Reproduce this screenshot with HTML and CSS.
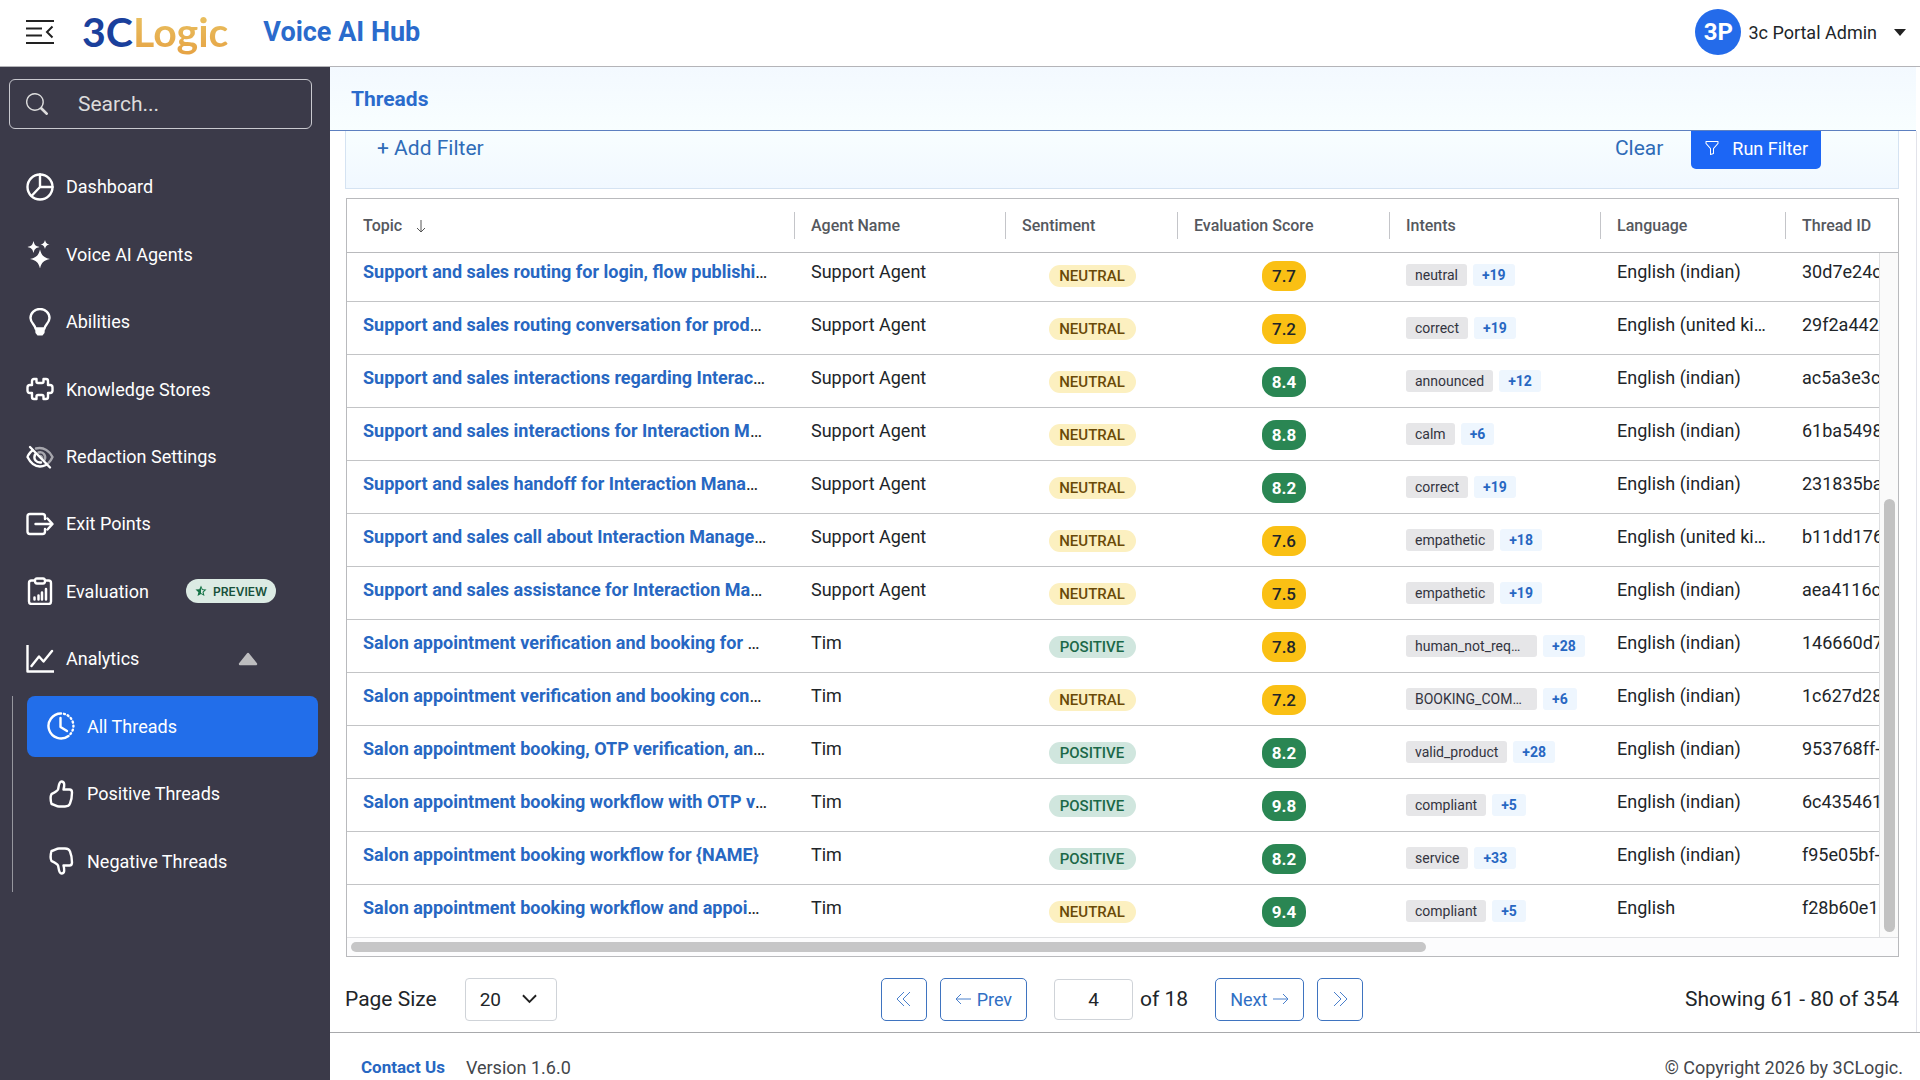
FILE: index.html
```html
<!DOCTYPE html>
<html lang="en">
<head>
  <meta charset="UTF-8">
  <title>Voice AI Hub - Threads</title>
  <link rel="stylesheet" href="styles.css">
</head>
<body>

<header class="topbar">
  <button class="menu-toggle" aria-label="Toggle menu">
    <svg width="28" height="24" viewBox="0 0 28 24" fill="none" stroke="#222" stroke-width="2"><path d="M0 1h28M0 8.500h16M0 15.500h16M0 23h28M26.500 6.500l-5.500 5.500 5.500 5.500"/></svg>
  </button>
  <a href="#" class="logo"><span class="logo-3c">3C</span><span class="logo-logic">Logic</span></a>
  <h1>Voice AI Hub</h1>
  <button class="user">
    <span class="avatar">3P</span>
    <span>3c Portal Admin</span>
    <svg class="caret" width="12" height="7" viewBox="0 0 12 7" fill="#222"><path d="M0 0h12L6 7z"/></svg>
  </button>
</header>

<div class="layout">

<aside class="sidebar">
  <label class="search">
    <svg width="22" height="22" viewBox="0 0 16 16" fill="#ddd"><path d="M11.742 10.344a6.500 6.500 0 1 0-1.397 1.398l3.948 3.965a1 1 0 0 0 1.415-1.414zM12 6.500a5.500 5.500 0 1 1-11 0 5.500 5.500 0 0 1 11 0"/></svg>
    <input type="text" placeholder="Search..." aria-label="Search">
  </label>

  <nav class="menu">
    <a href="#">
      <svg viewBox="0 0 28 28"><circle cx="14" cy="14" r="12.500"/><path d="M14 1.500V14h12.500M14 14l-8.500 9"/></svg>
      Dashboard
    </a>
    <a href="#">
      <svg viewBox="0 0 28 28" class="solid"><path d="M14 9.500c1.500 6 3.500 8 10 9.500-6.500 1.500-8.500 3.500-10 9.500-1.500-6-3.500-8-10-9.500 6.500-1.500 8.500-3.500 10-9.500zM7.500 1c1 4 2 5 6 6-4 1-5 2-6 6-1-4-2-5-6-6 4-1 5-2 6-6zM19 0c.8 3 1.500 3.700 4.500 4.500-3 .8-3.700 1.500-4.500 4.500-.8-3-1.500-3.700-4.500-4.500 3-.8 3.700-1.500 4.500-4.500z"/></svg>
      Voice AI Agents
    </a>
    <a href="#">
      <svg viewBox="0 0 28 28"><path d="M9.500 20.500c0-3-5-5.500-5-10.500a9.500 9 0 0 1 19 0c0 5-5 7.500-5 10.500z"/><path class="solid" d="M9 20h10l-.5 5-2 2.500h-5l-2-2.500z"/></svg>
      Abilities
    </a>
    <a href="#">
      <svg viewBox="0 0 28 28"><path d="M8 4h2.500v2.500q0 1.500 1.500 1.500h4q1.500 0 1.500-1.500V4H20q2 0 2 2v4h2q2.500 0 2.500 2.500v3q0 2.500-2.500 2.500h-2v4q0 2-2 2h-2.500v-2.500q0-1.500-1.500-1.500h-4q-1.500 0-1.500 1.500V24H8q-2 0-2-2v-4H4q-2.500 0-2.500-2.500v-3Q1.500 10 4 10h2V6q0-2 2-2z"/></svg>
      Knowledge Stores
    </a>
    <a href="#">
      <svg viewBox="0 0 28 28"><g><path d="M6.500 7.500C4 9 1.500 13 1.500 14c2 4 6.500 9.500 12.500 9.500 2 0 4-.6 6-1.500"/><path d="M9 11.500c-2 5 1.500 8.500 6 8"/></g><g opacity=".55"><path d="M10 5.500c8-2 14 3 16.500 8.500-1 2.500-2.500 4.500-4.500 6.500"/><path d="M12.500 9.500c5-1.500 8 3.500 6 7.500M13.500 13a2 2 0 0 1 2.500 2.500"/></g><path d="M4 4l20 20.500"/></svg>
      Redaction Settings
    </a>
    <a href="#">
      <svg viewBox="0 0 28 28"><path d="M19 9V6.500q0-2.500-2.500-2.500H4Q1.500 4 1.500 6.500v15Q1.500 24 4 24h12.500q2.500 0 2.500-2.500V19M9.500 14H26M21.500 8.500l5 5.500-5 5.500"/></svg>
      Exit Points
    </a>
    <a href="#">
      <svg viewBox="0 0 28 28"><path d="M9 3.500H5.500q-2.500 0-2.500 2.500v18.500Q3 27 5.500 27h17q2.500 0 2.500-2.500V6q0-2.500-2.500-2.500H19M11 1.500h6q2 0 2 2.500t-2 2.500h-6Q9 6.500 9 4t2-2.500z"/><path stroke-width="2.500" d="M8.500 22.500v-2M12.500 22.500v-4M16 22.500v-7M20 22.500V12"/></svg>
      Evaluation
      <span class="preview"><svg width="12" height="12" viewBox="0 0 24 24"><path d="M12 1l3.300 7.300 7.700.8-5.800 5.200L19 22l-7-4-7 4 1.800-7.700L1 9.100l7.700-.8zm0 4.500v10.700l3.900 2.300-1-4.700 3.500-3.200-4.500-.5z" fill="#157347" fill-rule="evenodd" stroke="none"/></svg>PREVIEW</span>
    </a>
    <a href="#">
      <svg viewBox="0 0 28 28"><path d="M1.500 0v26.500H28M5.500 21l7.500-9.500 4.500 5L26 6"/></svg>
      Analytics
      <svg class="up" viewBox="0 0 20 14"><path d="M10 2l8 10H2z"/></svg>
    </a>
    <div class="submenu">
      <a href="#" class="active">
        <svg viewBox="0 0 28 28"><path d="M14 1.500a12.500 12.500 0 1 0 7.500 22.500"/><path stroke-dasharray="1 3" d="M17 1.800A12.500 12.500 0 0 1 23 22.500"/><path d="M13.500 6v9l6.500 4"/></svg>
        All Threads
      </a>
      <a href="#">
        <svg viewBox="0 0 28 28"><path d="M4.500 14c2-1 5.500-2.500 6.500-4.500.8-2 .6-8 3.500-8 3.500 0 3 4.500 2 8h6q2.500 0 2.500 3c0 4-.5 7.500-2 11-.8 2.500-2.500 3-5 3h-6c-2.500 0-4.500-2-7.500-2.500-1-3.500-1.500-7 0-10z"/></svg>
        Positive Threads
      </a>
      <a href="#">
        <svg viewBox="0 0 28 28"><path d="M4.500 14c2 1 5.500 2.500 6.500 4.500.8 2 .6 8 3.500 8 3.500 0 3-4.500 2-8h6q2.500 0 2.500-3c0-4-.5-7.500-2-11-.8-2.500-2.500-3-5-3h-6C9.500 1.500 7.500 3.500 4.500 4c-1 3.500-1.500 7 0 10z"/></svg>
        Negative Threads
      </a>
    </div>
  </nav>
</aside>

<main class="main">
  <div class="page-title"><h2>Threads</h2></div>

  <section class="content">
    <div class="filter">
      <button class="link-btn">+ Add Filter</button>
      <button class="link-btn clear">Clear</button>
      <button class="run-btn">
        <svg width="16" height="16" viewBox="0 0 16 16" fill="#fff"><path d="M1.500 1.500A.5.5 0 0 1 2 1h12a.5.5 0 0 1 .5.5v2a.5.5 0 0 1-.128.334L10 8.692V13.500a.5.5 0 0 1-.342.474l-3 1A.5.5 0 0 1 6 14.500V8.692L1.628 3.834A.5.5 0 0 1 1.500 3.500zm1 .5v1.308l4.372 4.858A.5.5 0 0 1 7 8.500v5.306l2-.666V8.500a.5.5 0 0 1 .128-.334L13.500 3.308V2z"/></svg>
        Run Filter
      </button>
    </div>

    <div class="grid-box">
      <table>
        <colgroup><col class="c-topic"><col class="c-agent"><col class="c-sent"><col class="c-score"><col class="c-intents"><col class="c-lang"><col></colgroup>
        <thead>
          <tr>
            <th>Topic <svg class="sort" width="10" height="14" viewBox="0 0 10 14" fill="none" stroke="#555"><path d="M5 1v12M1 9l4 4 4-4"/></svg></th>
            <th>Agent Name</th><th>Sentiment</th><th>Evaluation Score</th><th>Intents</th><th>Language</th><th>Thread ID</th>
          </tr>
        </thead>
        <tbody>
          <tr><td><a href="#">Support and sales routing for login, flow publishi</a>…</td><td>Support Agent</td><td class="mid"><span class="badge neutral">NEUTRAL</span></td><td class="mid"><span class="score fair">7.7</span></td><td><span class="chip">neutral</span><span class="chip more">+19</span></td><td>English (indian)</td><td>30d7e24c</td></tr>
          <tr><td><a href="#">Support and sales routing conversation for prod</a>…</td><td>Support Agent</td><td class="mid"><span class="badge neutral">NEUTRAL</span></td><td class="mid"><span class="score fair">7.2</span></td><td><span class="chip">correct</span><span class="chip more">+19</span></td><td>English (united ki…</td><td>29f2a442</td></tr>
          <tr><td><a href="#">Support and sales interactions regarding Interac</a>…</td><td>Support Agent</td><td class="mid"><span class="badge neutral">NEUTRAL</span></td><td class="mid"><span class="score good">8.4</span></td><td><span class="chip">announced</span><span class="chip more">+12</span></td><td>English (indian)</td><td>ac5a3e3c</td></tr>
          <tr><td><a href="#">Support and sales interactions for Interaction M</a>…</td><td>Support Agent</td><td class="mid"><span class="badge neutral">NEUTRAL</span></td><td class="mid"><span class="score good">8.8</span></td><td><span class="chip">calm</span><span class="chip more">+6</span></td><td>English (indian)</td><td>61ba5498</td></tr>
          <tr><td><a href="#">Support and sales handoff for Interaction Mana</a>…</td><td>Support Agent</td><td class="mid"><span class="badge neutral">NEUTRAL</span></td><td class="mid"><span class="score good">8.2</span></td><td><span class="chip">correct</span><span class="chip more">+19</span></td><td>English (indian)</td><td>231835ba</td></tr>
          <tr><td><a href="#">Support and sales call about Interaction Manage</a>…</td><td>Support Agent</td><td class="mid"><span class="badge neutral">NEUTRAL</span></td><td class="mid"><span class="score fair">7.6</span></td><td><span class="chip">empathetic</span><span class="chip more">+18</span></td><td>English (united ki…</td><td>b11dd176</td></tr>
          <tr><td><a href="#">Support and sales assistance for Interaction Ma</a>…</td><td>Support Agent</td><td class="mid"><span class="badge neutral">NEUTRAL</span></td><td class="mid"><span class="score fair">7.5</span></td><td><span class="chip">empathetic</span><span class="chip more">+19</span></td><td>English (indian)</td><td>aea4116c</td></tr>
          <tr><td><a href="#">Salon appointment verification and booking for </a>…</td><td>Tim</td><td class="mid"><span class="badge positive">POSITIVE</span></td><td class="mid"><span class="score fair">7.8</span></td><td><span class="chip wide">human_not_req…</span><span class="chip more">+28</span></td><td>English (indian)</td><td>146660d7</td></tr>
          <tr><td><a href="#">Salon appointment verification and booking con</a>…</td><td>Tim</td><td class="mid"><span class="badge neutral">NEUTRAL</span></td><td class="mid"><span class="score fair">7.2</span></td><td><span class="chip wide">BOOKING_COM…</span><span class="chip more">+6</span></td><td>English (indian)</td><td>1c627d28</td></tr>
          <tr><td><a href="#">Salon appointment booking, OTP verification, an</a>…</td><td>Tim</td><td class="mid"><span class="badge positive">POSITIVE</span></td><td class="mid"><span class="score good">8.2</span></td><td><span class="chip">valid_product</span><span class="chip more">+28</span></td><td>English (indian)</td><td>953768ff-</td></tr>
          <tr><td><a href="#">Salon appointment booking workflow with OTP v</a>…</td><td>Tim</td><td class="mid"><span class="badge positive">POSITIVE</span></td><td class="mid"><span class="score good">9.8</span></td><td><span class="chip">compliant</span><span class="chip more">+5</span></td><td>English (indian)</td><td>6c435461</td></tr>
          <tr><td><a href="#">Salon appointment booking workflow for {NAME}</a></td><td>Tim</td><td class="mid"><span class="badge positive">POSITIVE</span></td><td class="mid"><span class="score good">8.2</span></td><td><span class="chip">service</span><span class="chip more">+33</span></td><td>English (indian)</td><td>f95e05bf-</td></tr>
          <tr><td><a href="#">Salon appointment booking workflow and appoi</a>…</td><td>Tim</td><td class="mid"><span class="badge neutral">NEUTRAL</span></td><td class="mid"><span class="score good">9.4</span></td><td><span class="chip">compliant</span><span class="chip more">+5</span></td><td>English</td><td>f28b60e1</td></tr>
        </tbody>
      </table>
      <div class="vscroll"><div class="vthumb"></div></div>
      <div class="hscroll"><div class="hthumb"></div></div>
    </div>

    <div class="pager">
      <div class="page-size">
        <label for="size">Page Size</label>
        <select id="size"><option>20</option><option>50</option></select>
      </div>
      <div class="pages">
        <button aria-label="First page"><svg width="16" height="18" viewBox="0 0 16 18"><path d="M8 2L1 9l7 7M14 2L7 9l7 7"/></svg></button>
        <button><svg width="16" height="12" viewBox="0 0 16 12"><path d="M16 6H1M6 1L1 6l5 5"/></svg> Prev</button>
        <input type="text" value="4" aria-label="Page">
        <span>of 18</span>
        <button class="next">Next <svg width="16" height="12" viewBox="0 0 16 12"><path d="M0 6h15M10 1l5 5-5 5"/></svg></button>
        <button aria-label="Last page"><svg width="16" height="18" viewBox="0 0 16 18"><path d="M2 2l7 7-7 7M8 2l7 7-7 7"/></svg></button>
      </div>
      <div class="showing">Showing 61 - 80 of 354</div>
    </div>
  </section>

  <footer class="footer">
    <a href="#">Contact Us</a>
    <span>Version 1.6.0</span>
    <span class="copy">© Copyright 2026 by 3CLogic.</span>
  </footer>
</main>

</div>

</body>
</html>
```
FILE: styles.css
```css
* { box-sizing: border-box; }
body { margin: 0; height: 100vh; overflow: hidden; display: flex; flex-direction: column; font-family: Roboto, sans-serif; font-size: 18px; color: #212529; background: #fff; }
button { font: inherit; background: none; border: 0; padding: 0; cursor: pointer; }
a { text-decoration: none; }
h1, h2 { margin: 0; color: #2a6bcc; }

/* top bar */
.topbar { height: 67px; flex: none; display: flex; align-items: center; padding: 0 14px 2px 26px; border-bottom: 1px solid #b4b4b8; }
.menu-toggle { display: flex; }
.logo { display: flex; margin-left: 28px; font-family: Lato, sans-serif; font-size: 41px; font-weight: bold; line-height: 48px; }
.logo-3c { color: #1a409c; }
.logo-logic { color: #e6b34f; background: linear-gradient(#e9c565, #e6a243); -webkit-background-clip: text; background-clip: text; -webkit-text-fill-color: transparent; }
h1 { font-size: 27px; margin-left: 35px; }
.user { margin-left: auto; display: flex; align-items: center; gap: 7px; color: #212529; }
.avatar { width: 46px; height: 46px; border-radius: 50%; background: #246bea; color: #fff; font-size: 24px; font-weight: bold; line-height: 46px; }
.caret { margin: 0 0 0 10px; }

.layout { flex: 1; display: flex; min-height: 0; }

/* sidebar */
.sidebar { width: 330px; flex: none; padding: 12px 9px; background: #3b3a49; }
.search { display: flex; align-items: center; height: 50px; width: 303px; border: 1px solid #c9c9cf; border-radius: 6px; padding-left: 16px; }
.search input { flex: 1; min-width: 0; margin-left: 30px; border: 0; outline: 0; background: none; font: inherit; font-size: 21px; color: #e6e6e6; padding: 0; }
.search input::placeholder { color: #dcdcdc; opacity: 1; }
.menu { display: grid; grid-auto-rows: 1fr; height: 742px; margin-top: 24px; }
.menu a { display: flex; align-items: center; gap: 12px; padding-left: 17px; color: #fff; }
.menu svg { width: 28px; height: 28px; flex: none; fill: none; stroke: #fff; stroke-width: 2.4; stroke-linejoin: round; stroke-linecap: round; }
.menu svg.solid, .menu .solid { fill: #fff; stroke: none; }
.menu .preview { display: flex; align-items: center; gap: 6px; height: 24px; margin-left: 25px; padding: 0 9px; border-radius: 12px; background: #dcebe4; color: #17503a; font-family: Inter, sans-serif; font-size: 12px; font-weight: 600; }
.menu .preview svg { width: 12px; height: 12px; }
.menu .up { width: 20px; height: 14px; fill: #bdbdbf; stroke: #bdbdbf; margin-left: 87px; }
.submenu { grid-row: span 3; display: grid; grid-auto-rows: 1fr; gap: 6px; margin: 3px 0; padding-left: 14px; border-left: 1px solid #96969e; margin-left: 3px; }
.submenu a { padding-left: 20px; border-radius: 8px; margin-right: 3px; }
.submenu .active { background: #226eea; }

/* main column */
.main { flex: 1; min-width: 0; display: flex; flex-direction: column; }
.page-title { height: 64px; flex: none; display: flex; align-items: center; padding-left: 21px; margin-right: 4px; background: linear-gradient(#f3f9ff, #f8feff); border-bottom: 1px solid #5d80c0; }
h2 { font-size: 21px; }
.content { padding: 0 17px 0 15px; margin-right: 3px; border-right: 1px solid #e2e3ea; overflow: hidden; }
.filter { display: flex; align-items: flex-end; height: 58px; padding: 0 77px 19px 31px; border: 1px solid #d5e3f2; border-top: 0; background: linear-gradient(#f8feff, #f1f8ff); }
.link-btn { height: 42px; font-size: 21px; color: #2f6cb8; }
.clear { margin-left: auto; margin-right: 28px; }
.run-btn { display: flex; align-items: center; gap: 12px; height: 42px; padding: 0 13px; border-radius: 5px; background: #1c66f5; color: #fff; }

/* threads table */
.grid-box { position: relative; margin: 9px 0 0 1px; border: 1px solid #b9babd; }
table { width: 100%; table-layout: fixed; border-collapse: separate; border-spacing: 0; }
.c-topic { width: 448px; }
.c-agent, .c-intents { width: 211px; }
.c-sent { width: 172px; }
.c-score { width: 212px; }
.c-lang { width: 185px; }
th { height: 54px; padding: 0 0 0 16px; text-align: left; font-size: 16px; font-weight: 500; color: #55585e; white-space: nowrap; border-bottom: 1px solid #b9babd; background: linear-gradient(#c4c5c9, #c4c5c9) no-repeat right center / 1px 27px; }
th:last-child { background: none; }
.sort { margin-left: 10px; vertical-align: -2px; }
td { height: 53px; padding: 8px 0 0 16px; line-height: 30px; vertical-align: top; white-space: nowrap; overflow: hidden; border-bottom: 1px solid #c3c4c6; color: #212529; }
tr:first-child td { height: 49px; padding-top: 4px; }
tr:last-child td { border-color: #dfe0e2; }
td a { color: #2767c2; font-weight: bold; }
.mid { text-align: center; padding-left: 0; }
.badge, .score, .chip { display: inline-block; vertical-align: top; }
.badge { width: 87px; margin-top: 8px; border-radius: 11px; font-size: 15px; font-weight: 500; line-height: 22px; }
.neutral { background: #fcf0c0; color: #6a4a08; }
.positive { background: #d0e6de; color: #1b6848; }
.score { width: 44px; margin-top: 4px; border-radius: 14px; font-size: 17px; line-height: 30px; }
.fair { background: #fac014; color: #212529; font-weight: 500; }
.good { background: #2a8653; color: #fff; font-weight: bold; }
.chip { margin: 7px 6px 0 0; padding: 0 9px; border-radius: 3px; background: #e6e6e8; color: #33343f; font-size: 14px; line-height: 22px; }
.wide { width: 131px; }
.more { background: #eef6fe; color: #2767c2; font-weight: bold; }
.vscroll { position: absolute; right: 0; top: 54px; bottom: 19px; width: 19px; background: #fafafa; border-left: 1px solid #dfe0e2; padding: 246px 3px 5px 4px; }
.vthumb { width: 11px; height: 100%; border-radius: 6px; background: #c2c2c2; }
.hscroll { height: 18px; padding: 4px; background: #fcfcfd; }
.hthumb { width: 69.7%; height: 10px; border-radius: 5px; background: #c6c6c7; }

/* pager */
.pager { display: grid; grid-template-columns: 1fr auto 1fr; align-items: center; height: 75px; padding-top: 9px; font-size: 21px; }
.page-size { display: flex; align-items: center; gap: 28px; }
.page-size select { width: 92px; height: 43px; padding: 0 14px; border: 1px solid #cfd3d8; border-radius: 4px; appearance: none; font: inherit; font-size: 19px; color: #212529; background: #fff url("data:image/svg+xml,%3Csvg xmlns='http://www.w3.org/2000/svg' viewBox='0 0 16 10' fill='none' stroke='%23222' stroke-width='2'%3E%3Cpath d='M1 1l7 7 7-7'/%3E%3C/svg%3E") no-repeat right 19px center / 15px 10px; }
.pages { display: flex; align-items: center; gap: 13px; }
.pages button { display: flex; align-items: center; gap: 6px; height: 43px; padding: 0 14px; border: 1px solid #3f74c0; border-radius: 5px; color: #2f6fc4; font-size: 18px; }
.pages svg { fill: none; stroke: #4a80cc; }
.pages input { width: 79px; height: 41px; margin: 0 -6px 0 14px; border: 1px solid #cfd3d8; border-radius: 4px; text-align: center; font: inherit; font-size: 19px; color: #212529; }
.pages .next { margin-left: 14px; }
.showing { text-align: right; }

.footer { flex: 1; display: flex; padding: 24px 17px 0 31px; line-height: 21px; border-top: 1px solid #a8a9ac; color: #43464b; }
.footer a { color: #2767c2; font-size: 17px; font-weight: bold; margin-right: 21px; }
.copy { margin-left: auto; }
```
